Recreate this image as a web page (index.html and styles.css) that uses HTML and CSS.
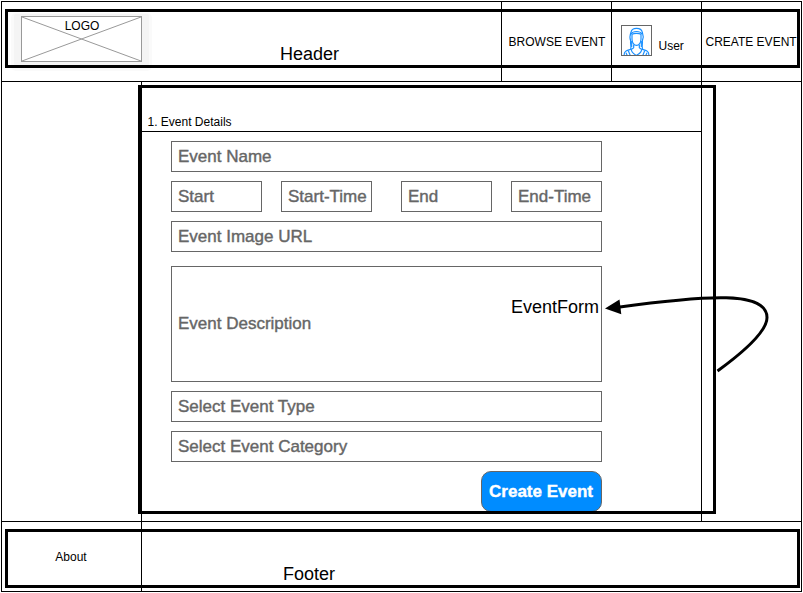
FILE: index.html
```html
<!DOCTYPE html>
<html lang="en">
<head>
<meta charset="utf-8">
<title>Create Event</title>
<link rel="stylesheet" href="styles.css">
</head>
<body>
<div class="page">
  <header class="header">
    <div class="brand">
      <div class="logo-halo">
        <div class="logo">
          <svg class="logo-cross" viewBox="0 0 119 44"><path d="M0 0L119 44M119 0L0 44"/></svg>
          <span class="logo-text">LOGO</span>
        </div>
      </div>
    </div>
    <div class="nav-item browse">BROWSE EVENT</div>
    <div class="nav-item user">
      <svg class="avatar" viewBox="0 0 93 93">
        <g class="person">
          <path d="M29 72C32 64 27 56 29 48C25 38 28 27 30 22C32 6 61 6 64 22C66 27 68 38 64 48C66 56 61 64 65 72"/>
          <path d="M30 27C36 17 57 17 63 27M32 48V66M61 48V66"/>
          <path d="M33 28V43C34 54 39 61 46.500 61C54 61 59 54 60 43V28C54 24 39 24 33 28Z"/>
          <path d="M38 59V68C35 74 22 73 15 78C10 81 9 87 9 92M55 59V68C58 74 71 73 78 78C83 81 84 87 84 92"/>
          <path d="M31 73C31 84 39 87 46 91C54 87 62 84 62 73M22 77L28 92M71 77L65 92M15 83L19 92M78 83L74 92"/>
        </g>
        <rect class="avatar-edge" x="1.500" y="1.500" width="90" height="90"/>
      </svg>
      <span class="user-name">User</span>
    </div>
    <div class="nav-item create">CREATE EVENT</div>
  </header>

  <main class="main">
    <aside class="side"></aside>
    <section class="details">
      <h1 class="section-title">1. Event Details</h1>
      <div class="form">
        <div class="field">Event Name</div>
        <div class="dates">
          <div class="field">Start</div>
          <div class="field">Start-Time</div>
          <div class="field field-end">End</div>
          <div class="field">End-Time</div>
        </div>
        <div class="field">Event Image URL</div>
        <div class="field description">Event Description</div>
        <div class="field">Select Event Type</div>
        <div class="field">Select Event Category</div>
        <div class="submit">Create Event</div>
      </div>
    </section>
    <aside></aside>
  </main>

  <footer class="footer">
    <div class="about">About</div>
  </footer>
</div>

<div class="frame frame-header"></div>
<div class="frame frame-form"></div>
<div class="frame frame-footer"></div>
<span class="note note-header">Header</span>
<span class="note note-form">EventForm</span>
<span class="note note-footer">Footer</span>
<svg class="arrow" viewBox="600 290 175 90">
  <path class="arrow-line" d="M717.500 371C745 351 767 331 767 317.500C767 291 708 295 618 307.300"/>
  <path d="M605 308.500L619.500 299.500L621.300 314.300Z"/>
</svg>
</body>
</html>
```
FILE: styles.css
```css
* { box-sizing: border-box; }

body {
  margin: 0;
  padding: 1px;
  position: relative;
  background: #fff;
  color: #000;
  font: 12px/14px "Liberation Sans", Arial, sans-serif;
  overflow: hidden;
}

.page {
  width: 801px;
  height: 591px;
  border: 1px solid #000;
}

.header {
  display: grid;
  grid-template-columns: 500px 110px 90px 99px;
  height: 80px;
  border-bottom: 1px solid #000;
}

.brand { padding: 12px 0 0 12px; }

.logo-halo {
  width: 135px;
  padding: 2px 7px 4px;
  background: #f4f4f4;
  border-radius: 2px;
  box-shadow: 0 2px 0 3px #fafafa;
}

.logo {
  display: grid;
  width: 121px;
  height: 46px;
  border: 1px solid #999;
  background: #fff;
}

.logo-cross, .logo-text { grid-area: 1 / 1; }

.logo-cross {
  width: 119px;
  height: 44px;
  fill: none;
  stroke: #999;
}

.logo-text {
  padding: 2px 0 0 1px;
  text-align: center;
}

.nav-item {
  border-left: 1px solid #000;
  margin-left: -1px;
  white-space: nowrap;
}

.browse { padding: 33px 0 0 6.6px; }
.create { padding: 33px 0 0 3.500px; }

.user {
  display: flex;
  gap: 6.500px;
  padding: 23px 0 0 9px;
}

.avatar {
  width: 31px;
  height: 31px;
}

.person {
  fill: none;
  stroke: #1a90ff;
  stroke-width: 3.5;
}

.avatar-edge {
  fill: none;
  stroke: #666;
  stroke-width: 3;
}

.user-name { padding-top: 14px; }

.main {
  display: grid;
  grid-template-columns: 140px 560px 99px;
  height: 440px;
  border-bottom: 1px solid #000;
}

.side, .details { border-right: 1px solid #000; }

.section-title {
  height: 50px;
  margin: 0;
  padding: 33px 0 0 5.500px;
  border-bottom: 1px solid #000;
  font: inherit;
}

.form {
  display: flex;
  flex-direction: column;
  gap: 9px;
  width: 431px;
  margin: 9px 0 0 29px;
}

.field {
  height: 31px;
  padding-left: 6px;
  border: 1px solid #666;
  color: #666;
  font-size: 17px;
  line-height: 29px;
  white-space: nowrap;
  -webkit-text-stroke: 0.4px #666;
}

.dates {
  display: grid;
  grid-template-columns: 91px 91px 101px 91px;
  column-gap: 19px;
}

.field-end { margin-left: 10px; }

.description {
  height: 116px;
  margin-top: 5px;
  line-height: 113px;
}

.submit {
  align-self: flex-end;
  width: 121px;
  height: 41px;
  padding-right: 1px;
  border: 1px solid #666;
  border-radius: 10px;
  background: #008cff;
  color: #fff;
  font-size: 17px;
  font-weight: bold;
  line-height: 40px;
  text-align: center;
  -webkit-text-stroke: 0.4px #fff;
}

.footer { height: 69px; }

.about {
  width: 140px;
  height: 69px;
  padding: 28px 1px 0 0;
  border-right: 1px solid #000;
  text-align: center;
}

/* Component outlines and labels annotating the wireframe */
.frame {
  position: absolute;
  border: 3px solid #000;
}

.frame-header, .frame-footer {
  left: 5px;
  width: 795px;
  height: 59px;
}

.frame-header { top: 9px; }
.frame-footer { top: 529px; }

.frame-form {
  left: 138px;
  top: 85px;
  width: 578px;
  height: 429px;
}

.note {
  position: absolute;
  font-size: 18px;
  line-height: 20px;
}

.note-header { left: 280px; top: 44px; }
.note-form { left: 511px; top: 297px; }
.note-footer { left: 283px; top: 564px; }

.arrow {
  position: absolute;
  left: 600px;
  top: 290px;
  width: 175px;
  height: 90px;
}

.arrow-line {
  fill: none;
  stroke: #000;
  stroke-width: 3;
}
```
